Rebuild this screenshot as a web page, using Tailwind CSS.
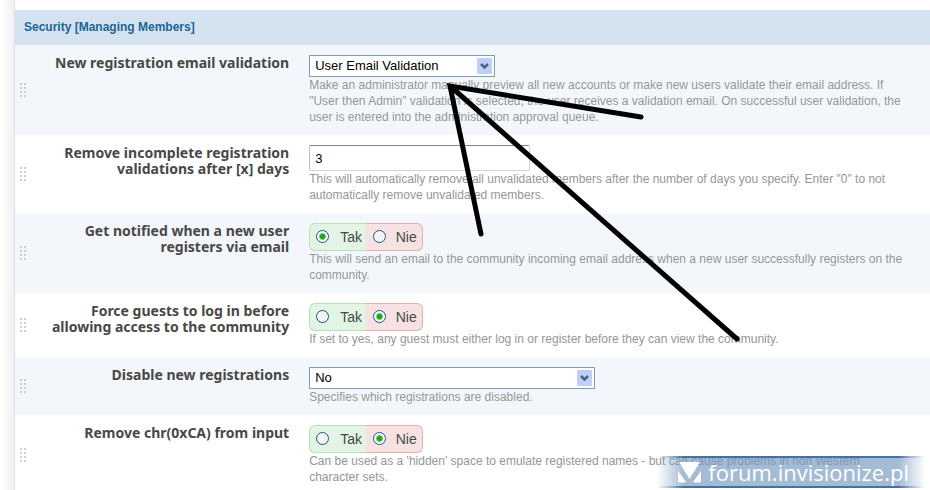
<!DOCTYPE html>
<html lang="en">

<head>
  <meta charset="UTF-8" />
  <meta name="viewport" content="width=device-width, initial-scale=1" />
  <title>Security [Managing Members]</title>
  <script src="https://cdn.jsdelivr.net/npm/@tailwindcss/browser@4"></script>
</head>

<body class="relative flex h-screen overflow-hidden bg-white font-['Liberation_Sans',Arial,sans-serif] text-xs leading-4 text-[#939799]">
  <div class="w-[14px] shrink-0 bg-linear-to-r from-white to-[#f1f1f1]"></div>

  <main class="min-w-0 flex-1 border-l border-[#d5e3ef] pt-[10px]">
    <h1 class="bg-[#d5e3f0] px-[9px] py-[9px] text-xs leading-[17px] font-bold text-[#1d6595]">Security [Managing Members]</h1>

    <form>
      <!-- Email validation -->
      <div class="grid grid-cols-[28px_28%_1fr] bg-[#f3f7fb] py-[10px]">
        <svg class="ml-[5px] self-center" width="6" height="14" fill="#cdcfd1" aria-hidden="true"><path d="M0 0h2v2H0zM4 0h2v2H4zM0 4h2v2H0zM4 4h2v2H4zM0 8h2v2H0zM4 8h2v2H4zM0 12h2v2H0zM4 12h2v2H4z" /></svg>
        <label for="validation" class="pr-[10px] text-right font-['Noto_Sans',sans-serif] text-sm leading-4 font-bold text-[#484848]">New registration email validation</label>
        <div class="pl-[10px]">
          <div class="relative w-[186px]">
            <select id="validation" class="block h-[22px] w-full appearance-none border border-[#7f9db9] bg-white pl-[5px] text-[13px] leading-5 text-black">
              <option>User Email Validation</option>
            </select>
            <svg class="pointer-events-none absolute top-[3px] right-[3px]" width="15" height="16" aria-hidden="true"><rect width="15" height="16" rx="1" fill="#bfd0f8" /><path d="M4 6l3.500 3.500L11 6" fill="none" stroke="#4d6185" stroke-width="2.500" /></svg>
          </div>
          <p>Make an administrator manually preview all new accounts or make new users validate their email address. If<br />"User then Admin" validation is selected, the user receives a validation email. On successful user validation, the<br />user is entered into the administration approval queue.</p>
        </div>
      </div>

      <!-- Incomplete registrations -->
      <div class="grid grid-cols-[28px_28%_1fr] py-[10px]">
        <svg class="ml-[5px] self-center" width="6" height="14" fill="#cdcfd1" aria-hidden="true"><path d="M0 0h2v2H0zM4 0h2v2H4zM0 4h2v2H0zM4 4h2v2H4zM0 8h2v2H0zM4 8h2v2H4zM0 12h2v2H0zM4 12h2v2H4z" /></svg>
        <label for="days" class="pr-[10px] text-right font-['Noto_Sans',sans-serif] text-sm leading-4 font-bold text-[#484848]">Remove incomplete registration validations after [x] days</label>
        <div class="pl-[10px]">
          <input id="days" type="text" value="3" class="block h-[26px] w-[221px] rounded-[2px] border border-[#d5d5d5] border-t-[#848484] border-l-[#c0c0c0] bg-white px-[5px] text-[13px] text-black" />
          <p>This will automatically remove all unvalidated members after the number of days you specify. Enter "0" to not<br />automatically remove unvalidated members.</p>
        </div>
      </div>

      <!-- Email notification -->
      <div class="grid grid-cols-[28px_28%_1fr] bg-[#f3f7fb] py-[10px]">
        <svg class="ml-[5px] self-center" width="6" height="14" fill="#cdcfd1" aria-hidden="true"><path d="M0 0h2v2H0zM4 0h2v2H4zM0 4h2v2H0zM4 4h2v2H4zM0 8h2v2H0zM4 8h2v2H4zM0 12h2v2H0zM4 12h2v2H4z" /></svg>
        <div id="notify-label" class="pr-[10px] text-right font-['Noto_Sans',sans-serif] text-sm leading-4 font-bold text-[#484848]">Get notified when a new user registers via email</div>
        <div class="pl-[10px]">
          <div role="radiogroup" aria-labelledby="notify-label" class="flex w-[114px] text-sm text-[#484848]">
            <label class="flex h-7 flex-1 items-center gap-[11px] rounded-l-md border border-r-0 border-[#b5e0b8] bg-[#e2f5e4] pl-[6px]">
              <input type="radio" name="notify" checked class="mb-[2px] size-[13px] appearance-none rounded-full border border-[#1f5185] bg-[#f4f4f1] checked:bg-[radial-gradient(circle,#1fa31f_0_2px,#6fcb6f_3px,#ffffff_4px)]" />Tak</label>
            <label class="flex h-7 flex-1 items-center gap-[10px] rounded-r-md border border-l-0 border-[#e5aeb0] bg-[#f6e2e2] pl-[7px]">
              <input type="radio" name="notify" class="mb-[2px] size-[13px] appearance-none rounded-full border border-[#1f5185] bg-[#f4f4f1] checked:bg-[radial-gradient(circle,#1fa31f_0_2px,#6fcb6f_3px,#ffffff_4px)]" />Nie</label>
          </div>
          <p>This will send an email to the community incoming email address when a new user successfully registers on the<br />community.</p>
        </div>
      </div>

      <!-- Force login -->
      <div class="grid grid-cols-[28px_28%_1fr] py-[10px]">
        <svg class="ml-[5px] self-center" width="6" height="14" fill="#cdcfd1" aria-hidden="true"><path d="M0 0h2v2H0zM4 0h2v2H4zM0 4h2v2H0zM4 4h2v2H4zM0 8h2v2H0zM4 8h2v2H4zM0 12h2v2H0zM4 12h2v2H4z" /></svg>
        <div id="force-label" class="pr-[10px] text-right font-['Noto_Sans',sans-serif] text-sm leading-4 font-bold text-[#484848]">Force guests to log in before allowing access to the community</div>
        <div class="pl-[10px]">
          <div role="radiogroup" aria-labelledby="force-label" class="flex w-[114px] text-sm text-[#484848]">
            <label class="flex h-7 flex-1 items-center gap-[11px] rounded-l-md border border-r-0 border-[#b5e0b8] bg-[#e2f5e4] pl-[6px]">
              <input type="radio" name="force" class="mb-[2px] size-[13px] appearance-none rounded-full border border-[#1f5185] bg-[#f4f4f1] checked:bg-[radial-gradient(circle,#1fa31f_0_2px,#6fcb6f_3px,#ffffff_4px)]" />Tak</label>
            <label class="flex h-7 flex-1 items-center gap-[10px] rounded-r-md border border-l-0 border-[#e5aeb0] bg-[#f6e2e2] pl-[7px]">
              <input type="radio" name="force" checked class="mb-[2px] size-[13px] appearance-none rounded-full border border-[#1f5185] bg-[#f4f4f1] checked:bg-[radial-gradient(circle,#1fa31f_0_2px,#6fcb6f_3px,#ffffff_4px)]" />Nie</label>
          </div>
          <p>If set to yes, any guest must either log in or register before they can view the community.</p>
        </div>
      </div>

      <!-- Disable registrations -->
      <div class="grid grid-cols-[28px_28%_1fr] bg-[#f3f7fb] py-[10px]">
        <svg class="ml-[5px] self-center" width="6" height="14" fill="#cdcfd1" aria-hidden="true"><path d="M0 0h2v2H0zM4 0h2v2H4zM0 4h2v2H0zM4 4h2v2H4zM0 8h2v2H0zM4 8h2v2H4zM0 12h2v2H0zM4 12h2v2H4z" /></svg>
        <label for="disable" class="pr-[10px] text-right font-['Noto_Sans',sans-serif] text-sm leading-4 font-bold text-[#484848]">Disable new registrations</label>
        <div class="pl-[10px]">
          <div class="relative w-[286px]">
            <select id="disable" class="block h-[22px] w-full appearance-none border border-[#7f9db9] bg-white pl-[5px] text-[13px] leading-5 text-black">
              <option>No</option>
            </select>
            <svg class="pointer-events-none absolute top-[3px] right-[3px]" width="15" height="16" aria-hidden="true"><rect width="15" height="16" rx="1" fill="#bfd0f8" /><path d="M4 6l3.500 3.500L11 6" fill="none" stroke="#4d6185" stroke-width="2.500" /></svg>
          </div>
          <p>Specifies which registrations are disabled.</p>
        </div>
      </div>

      <!-- Strip chr(0xCA) -->
      <div class="grid grid-cols-[28px_28%_1fr] py-[10px]">
        <svg class="ml-[5px] self-center" width="6" height="14" fill="#cdcfd1" aria-hidden="true"><path d="M0 0h2v2H0zM4 0h2v2H4zM0 4h2v2H0zM4 4h2v2H4zM0 8h2v2H0zM4 8h2v2H4zM0 12h2v2H0zM4 12h2v2H4z" /></svg>
        <div id="strip-label" class="pr-[10px] text-right font-['Noto_Sans',sans-serif] text-sm leading-4 font-bold text-[#484848]">Remove chr(0xCA) from input</div>
        <div class="pl-[10px]">
          <div role="radiogroup" aria-labelledby="strip-label" class="flex w-[114px] text-sm text-[#484848]">
            <label class="flex h-7 flex-1 items-center gap-[11px] rounded-l-md border border-r-0 border-[#b5e0b8] bg-[#e2f5e4] pl-[6px]">
              <input type="radio" name="strip" class="mb-[2px] size-[13px] appearance-none rounded-full border border-[#1f5185] bg-[#f4f4f1] checked:bg-[radial-gradient(circle,#1fa31f_0_2px,#6fcb6f_3px,#ffffff_4px)]" />Tak</label>
            <label class="flex h-7 flex-1 items-center gap-[10px] rounded-r-md border border-l-0 border-[#e5aeb0] bg-[#f6e2e2] pl-[7px]">
              <input type="radio" name="strip" checked class="mb-[2px] size-[13px] appearance-none rounded-full border border-[#1f5185] bg-[#f4f4f1] checked:bg-[radial-gradient(circle,#1fa31f_0_2px,#6fcb6f_3px,#ffffff_4px)]" />Nie</label>
          </div>
          <p>Can be used as a 'hidden' space to emulate registered names - but can cause problems in non Western<br />character sets.</p>
        </div>
      </div>
    </form>
  </main>

  <!-- Hand-drawn arrow -->
  <svg class="pointer-events-none absolute top-0 left-0" width="930" height="490" fill="none" stroke="#000" stroke-width="5" stroke-linecap="round" aria-hidden="true">
    <path d="M641 117L450 86L481 234M450 86L737 339" />
  </svg>

  <!-- Watermark -->
  <div class="absolute right-[5px] bottom-[2px] flex h-8 items-center gap-[6px] pr-[16px] pl-[20px] text-white">
    <div class="absolute inset-0 border-y-2 border-[#48709b] bg-[#7397c0]/65 mask-x-from-90% mask-x-to-100%"></div>
    <svg class="relative" width="25" height="24" fill="#fff" aria-hidden="true"><path d="M2 2h21L12.500 19zM1 11l8 11q-4 1-8 0zM24 11l-8 11q4 1 8 0z" /></svg>
    <span class="relative font-['Open_Sans',sans-serif] text-[22px] leading-7 font-medium">forum.invisionize.pl</span>
  </div>
</body>

</html>
